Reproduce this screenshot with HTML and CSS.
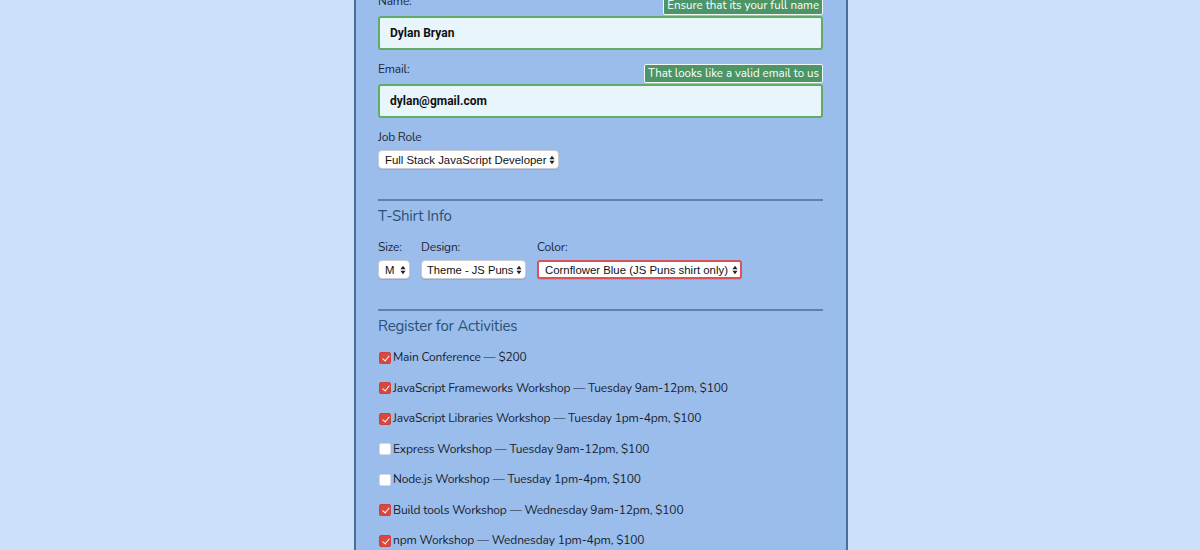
FILE: index.html
```html
<!DOCTYPE html>
<html lang="en">
<head>
<meta charset="utf-8">
<title>Conference Registration</title>
<link rel="stylesheet" href="styles.css">
</head>
<body>
<main class="panel">
  <form class="form">
    <div class="field">
      <label class="label" for="name">Name:</label>
      <div class="input-wrap">
        <input class="text-input" id="name" type="text" value="Dylan Bryan">
        <span class="tip">Ensure that its your full name</span>
      </div>
    </div>
    <div class="field">
      <label class="label" for="mail">Email:</label>
      <div class="input-wrap">
        <input class="text-input" id="mail" type="email" value="dylan@gmail.com">
        <span class="tip">That looks like a valid email to us</span>
      </div>
    </div>
    <div class="field">
      <label class="label label-select" for="title">Job Role</label>
      <div class="select-wrap">
        <select class="select select-role" id="title"><option>Full Stack JavaScript Developer</option></select>
        <svg class="arrows" viewBox="0 0 7 11" width="6" height="10"><path d="M3.5 0.5L6.5 4.5H0.5Z M3.5 10.5L0.5 6.5H6.5Z" fill="#222"/></svg>
      </div>
    </div>

    <hr class="rule">

    <h2 class="section-title">T-Shirt Info</h2>
    <div class="shirt-row">
      <div class="col">
        <label class="label label-select" for="size">Size:</label>
        <div class="select-wrap">
          <select class="select select-size" id="size"><option>M</option></select>
          <svg class="arrows" viewBox="0 0 7 11" width="6" height="10"><path d="M3.5 0.5L6.5 4.5H0.5Z M3.5 10.5L0.5 6.5H6.5Z" fill="#222"/></svg>
        </div>
      </div>
      <div class="col">
        <label class="label label-select" for="design">Design:</label>
        <div class="select-wrap">
          <select class="select select-design" id="design"><option>Theme - JS Puns</option></select>
          <svg class="arrows" viewBox="0 0 7 11" width="6" height="10"><path d="M3.5 0.5L6.5 4.5H0.5Z M3.5 10.5L0.5 6.5H6.5Z" fill="#222"/></svg>
        </div>
      </div>
      <div class="col">
        <label class="label label-select" for="color">Color:</label>
        <div class="select-wrap">
          <select class="select select-color" id="color"><option>Cornflower Blue (JS Puns shirt only)</option></select>
          <svg class="arrows" viewBox="0 0 7 11" width="6" height="10"><path d="M3.5 0.5L6.5 4.5H0.5Z M3.5 10.5L0.5 6.5H6.5Z" fill="#222"/></svg>
        </div>
      </div>
    </div>

    <hr class="rule">

    <h2 class="section-title">Register for Activities</h2>
    <div class="activities">
      <label class="activity"><input class="check" type="checkbox" checked> Main Conference — $200</label>
      <label class="activity"><input class="check" type="checkbox" checked> JavaScript Frameworks Workshop — Tuesday 9am-12pm, $100</label>
      <label class="activity"><input class="check" type="checkbox" checked> JavaScript Libraries Workshop — Tuesday 1pm-4pm, $100</label>
      <label class="activity"><input class="check" type="checkbox"> Express Workshop — Tuesday 9am-12pm, $100</label>
      <label class="activity"><input class="check" type="checkbox"> Node.js Workshop — Tuesday 1pm-4pm, $100</label>
      <label class="activity"><input class="check" type="checkbox" checked> Build tools Workshop — Wednesday 9am-12pm, $100</label>
      <label class="activity"><input class="check" type="checkbox" checked> npm Workshop — Wednesday 1pm-4pm, $100</label>
    </div>
  </form>
</main>
</body>
</html>
```

FILE: styles.css
```css
* { box-sizing: border-box; }

html, body {
  margin: 0;
  height: 100%;
  overflow: hidden;
}

body {
  background: #cde0f9;
  font-family: "Nunito", "Lato", "Open Sans", sans-serif;
  color: #1c2733;
}

.panel {
  width: 494px;
  margin-left: calc(50% - 246px);
  min-height: 100%;
  background: #9bbdec;
  border-left: 2px solid #46709a;
  border-right: 2px solid #46709a;
  padding: 0 23px 0 22px;
}

.form {
  margin-top: -8px;
}

.field {
  margin-bottom: 10px;
}

.label {
  display: block;
  font-size: 12px;
  letter-spacing: -0.2px;
  line-height: 18px;
  margin-bottom: 6px;
}

.label-select {
  margin-bottom: 4px;
}

.input-wrap {
  position: relative;
}

.text-input {
  display: block;
  width: 445px;
  height: 34px;
  border: 2px solid #62ac68;
  border-radius: 3px;
  background: #e8f6fb;
  padding: 0 10px;
  font-family: Roboto, "Liberation Sans", sans-serif;
  font-weight: 700;
  font-size: 12px;
  color: #111;
  outline: none;
}

.tip {
  position: absolute;
  right: 0;
  bottom: calc(100% + 1px);
  background: #4b9567;
  color: #fff;
  border: 1px solid #f2f8f4;
  border-radius: 2px;
  font-size: 11.5px;
  line-height: 17px;
  padding: 0 3px;
  white-space: nowrap;
}

.select-wrap {
  position: relative;
  width: fit-content;
}

.select {
  appearance: none;
  -webkit-appearance: none;
  display: block;
  height: 19px;
  background: #fff;
  border: 1px solid #c9ccd2;
  border-radius: 4px;
  box-shadow: 0 1px 1px rgba(40, 60, 90, 0.15);
  font-family: "Liberation Sans", Arial, sans-serif;
  font-size: 11.4px;
  color: #111;
  padding: 0 10px 0 6px;
  margin: 0;
}

.select-role { width: 181px; }
.select-size { width: 32px; }
.select-design {
  width: 105px;
  padding-left: 5px;
  font-size: 11.2px;
}
.select-color {
  width: 205px;
  border: 2px solid #d6545a;
  border-radius: 3px;
  padding-left: 6px;
}

.arrows {
  position: absolute;
  right: 4px;
  top: 5px;
  pointer-events: none;
}

.rule {
  border: 0;
  height: 2px;
  background: #5b83ad;
  margin: 30px 0 0;
}

.section-title {
  margin: 5px 0 0;
  font-weight: 400;
  font-size: 15px;
  letter-spacing: -0.2px;
  line-height: 20px;
  color: #2b5174;
}

.shirt-row {
  display: flex;
  gap: 11px;
  margin-top: 12px;
}

.activities {
  display: flex;
  flex-direction: column;
  margin-top: 6px;
}

.activity {
  display: flex;
  align-items: center;
  height: 30.5px;
  flex-shrink: 0;
  font-size: 12px;
  letter-spacing: -0.15px;
  color: #17222d;
}

.check {
  appearance: none;
  -webkit-appearance: none;
  position: relative;
  width: 12px;
  height: 12px;
  margin: 1px 2px 0 1px;
  border-radius: 2px;
  background: #fff;
  border: 1px solid #d5dbe4;
}

.check:checked {
  background: #d9473f;
  border-color: #c9433c;
}

.check:checked::after {
  content: "";
  position: absolute;
  left: 3.5px;
  top: 1px;
  width: 3px;
  height: 6px;
  border: solid #fff;
  border-width: 0 1.5px 1.5px 0;
  transform: rotate(40deg);
}
```
